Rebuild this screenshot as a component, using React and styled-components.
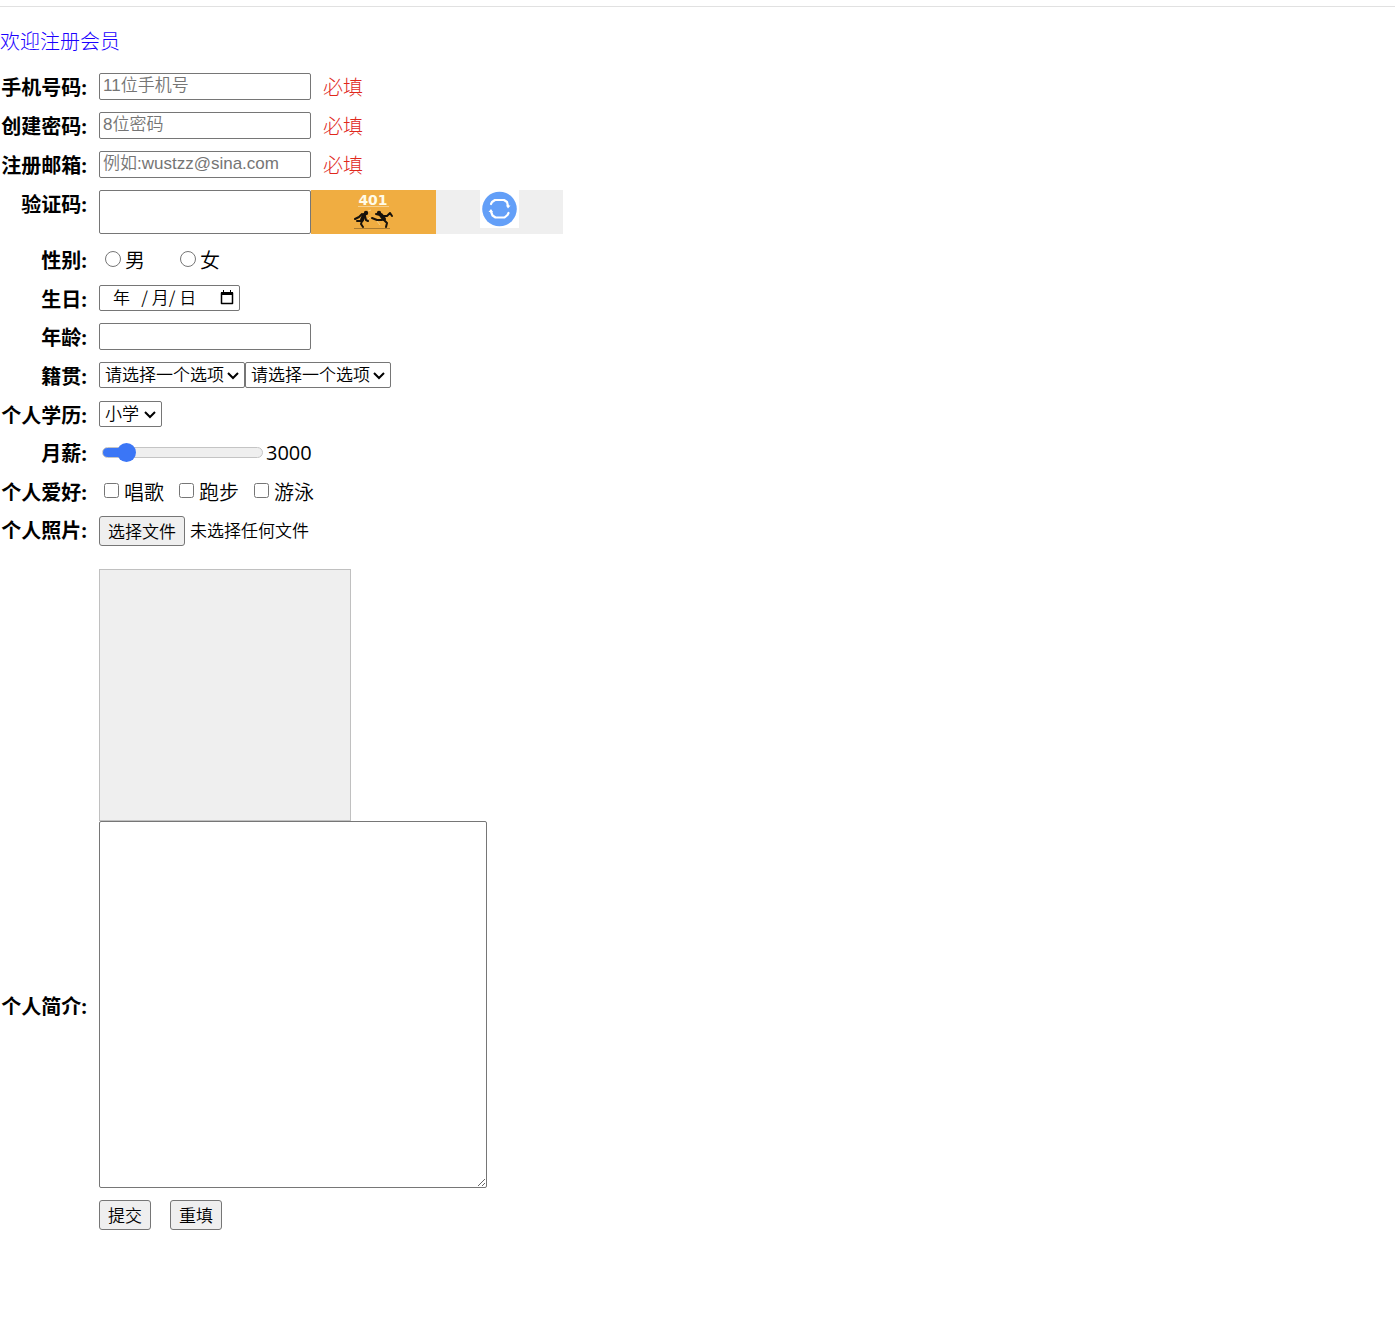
import React, { useRef, useState } from "react";
import styled, { createGlobalStyle } from "styled-components";

const GlobalStyle = createGlobalStyle`
  * { box-sizing: border-box; }
  body {
    margin: 0;
    background: #fff;
    color: #000;
    font: 350 20px/29px "Open Sans", "Noto Sans CJK SC", sans-serif;
  }
`;

const controlFont = `350 17px "Liberation Sans", "Noto Sans CJK SC", sans-serif`;

const Page = styled.main`
  padding: 6px 0 92px;
`;

const Divider = styled.hr`
  height: 1px;
  margin: 0;
  border: 0;
  background: #e1e1e1;
`;

const Title = styled.h1`
  margin: 20px 0 17px;
  color: #1a00ff;
  font-size: 20px;
  font-weight: 300;
`;

const Form = styled.form`
  display: flex;
  flex-direction: column;
  gap: 12px;
`;

const Group = styled.div`
  display: flex;
  flex-direction: column;
`;

const Row = styled.div`
  display: flex;
  align-items: ${(p) => (p.$center ? "center" : "flex-start")};
  gap: 12px;
  min-height: ${(p) => (p.$compact ? 26 : 27)}px;
`;

const Name = styled.label`
  flex: 0 0 87px;
  height: 26px;
  font-weight: 700;
  text-align: right;
  white-space: nowrap;
`;

const Controls = styled.div`
  display: flex;
  align-items: flex-start;
  gap: ${(p) => p.$gap || 0}px;
`;

const Column = styled.div`
  display: flex;
  flex-direction: column;
  gap: 23px;
`;

const TextInput = styled.input`
  width: 212px;
  height: ${(p) => (p.$tall ? 44 : 27)}px;
  padding: 0 3px 2px;
  border: 1px solid #767676;
  border-radius: 2px;
  background: #fff;
  color: #000;
  font: ${controlFont};
  &::placeholder { color: #757575; }
`;

const Required = styled.span`
  height: 26px;
  color: #e0281c;
  font-weight: 300;
`;

const CaptchaButton = styled.button`
  display: flex;
  justify-content: center;
  align-items: flex-start;
  width: ${(p) => p.$width}px;
  height: 44px;
  padding: 0;
  border: 0;
  background: ${(p) => p.$fill};
`;

const Choice = styled.label`
  display: flex;
  height: 26px;
  min-width: 75px;
`;

const Radio = styled.input`
  width: 16px;
  height: 16px;
  margin: 5px 4px 0 6px;
`;

const Check = styled.input`
  width: 15px;
  height: 15px;
  margin: 5px 5px 0 5px;
`;

const DateBox = styled.div`
  display: flex;
  align-items: center;
  width: 141px;
  height: 26px;
  padding: 0 5px 2px 13px;
  border: 1px solid #767676;
  border-radius: 2px;
`;

const DateInput = styled.input`
  flex: 1;
  min-width: 0;
  height: 22px;
  padding: 0 0 2px;
  border: 0;
  outline: 0;
  background: none;
  color: #000;
  font: 350 17px "Noto Sans CJK SC", sans-serif;
`;

const IconButton = styled.button`
  display: flex;
  padding: 0;
  border: 0;
  background: none;
`;

const SelectBox = styled.div`
  position: relative;
  width: ${(p) => p.$width}px;
`;

const NativeSelect = styled.select`
  display: block;
  appearance: none;
  width: 100%;
  height: 26px;
  padding: 0 20px 0 5px;
  border: 1px solid #767676;
  border-radius: 2px;
  background: #fff;
  color: #000;
  font: ${controlFont};
`;

const Chevron = styled.svg`
  position: absolute;
  top: 9px;
  right: 6px;
  pointer-events: none;
`;

const Slider = styled.input`
  appearance: none;
  width: 161px;
  height: 20px;
  margin: 3px 3px 0;
  background: none;

  &::-webkit-slider-runnable-track {
    height: 11px;
    border: 1px solid #c4c4c4;
    border-radius: 6px;
    background: linear-gradient(to right, #3b76f6 ${(p) => p.$fill}%, #efefef ${(p) => p.$fill}%);
  }

  &::-webkit-slider-thumb {
    appearance: none;
    width: 19px;
    height: 19px;
    margin-top: -5px;
    border-radius: 50%;
    background: #3b76f6;
  }
`;

const Amount = styled.output`
  height: 26px;
  font-weight: 400;
  line-height: 27px;
`;

const Button = styled.button`
  height: 30px;
  padding: 0 8px 1px;
  border: 1px solid #767676;
  border-radius: 3px;
  background: #efefef;
  color: #000;
  font: ${controlFont};
`;

const FileName = styled.span`
  font-size: 17px;
`;

const Preview = styled.div`
  width: 252px;
  height: 252px;
  border: 1px solid #c0c0c0;
  background: #efefef;
`;

const TextArea = styled.textarea`
  width: 388px;
  height: 367px;
  border: 1px solid #767676;
  border-radius: 2px;
  background: #fff;
  font: ${controlFont};
`;

const Actions = styled.div`
  display: flex;
  gap: 19px;
  padding-left: 99px;
`;

function CaptchaArt() {
  return (
    <svg width="125" height="44" viewBox="0 0 125 44" aria-label="401">
      <text x="62" y="15" textAnchor="middle" fill="#fffbe8" fontFamily="DejaVu Sans" fontSize="14" fontWeight="700">401</text>
      <path d="M47 16.5h31" stroke="#f6d08e" strokeWidth="1" />
      <path d="M43 38.5h36" stroke="#aa7b31" strokeWidth="1" />
      <path d="M57 21l3-1M56 30l3-3M66 31l3 4" fill="none" stroke="#f6cf87" strokeWidth="1" />
      <g fill="none" stroke="#17120b" strokeLinecap="round" strokeLinejoin="round">
        <path d="M53 25l-2 5" strokeWidth="4" />
        <path d="M51 24l-3 3-4 2M50 31l-4 0M51 31l-1 3 2 3M54 26l1 4 2 1" strokeWidth="2" />
        <path d="M70 25l3 4" strokeWidth="4" />
        <path d="M69 25l-4-1M71 30l-5 0-5-2M73 30l3 3-1 4M72 26l4 0 3-3 2 3" strokeWidth="2" />
      </g>
      <circle cx="55" cy="23" r="2.200" fill="#17120b" />
      <circle cx="68" cy="23" r="2.200" fill="#17120b" />
    </svg>
  );
}

function RefreshArt() {
  return (
    <svg width="39" height="38" viewBox="0 0 39 38" aria-hidden="true">
      <path fill="#fff" d="M0 0h39v38H0z" />
      <circle cx="19.5" cy="19" r="17.3" fill="#639ff8" />
      <g fill="none" stroke="#fff" strokeWidth="2.2" strokeLinecap="round" strokeLinejoin="round">
        <path d="M11 14l1-2 3-2h9l3 2 1 4" />
        <path d="M28.500 23l-1 2-3 2.500h-9l-3-2-1.500-4" />
      </g>
      <path fill="#fff" d="M26 15.500h4.500L28 18.500zM8.500 22h4.500L11 19z" />
    </svg>
  );
}

function CalendarArt() {
  return (
    <svg width="14" height="15" viewBox="0 0 14 15" aria-hidden="true">
      <path d="M1.500 3h11v10.500h-11z" fill="none" stroke="#000" strokeWidth="1.500" strokeLinejoin="round" />
      <path d="M1 2h12v3H1zM3 0h1v3H3zM10 0h1v3h-1z" />
    </svg>
  );
}

function Select({ width, children, ...rest }) {
  return (
    <SelectBox $width={width}>
      <NativeSelect {...rest}>{children}</NativeSelect>
      <Chevron width="12" height="9" viewBox="0 0 12 9" aria-hidden="true">
        <path d="M1 2l5 5 5-5" fill="none" stroke="#000" strokeWidth="2" />
      </Chevron>
    </SelectBox>
  );
}

const requiredFields = [
  { id: "phone", label: "手机号码:", type: "tel", hint: "11位手机号" },
  { id: "password", label: "创建密码:", type: "password", hint: "8位密码" },
  { id: "email", label: "注册邮箱:", type: "email", hint: "例如:wustzz@sina.com" },
];

const SALARY_MIN = 2000;
const SALARY_MAX = 12000;

export default function App() {
  const [salary, setSalary] = useState(3000);
  const [fileName, setFileName] = useState("未选择任何文件");
  const fileRef = useRef(null);
  const fill = ((salary - SALARY_MIN) / (SALARY_MAX - SALARY_MIN)) * 88 + 6;

  return (
    <>
      <GlobalStyle />
      <Page>
        <Divider />
        <Title>欢迎注册会员</Title>
        <Form onSubmit={(e) => e.preventDefault()}>
          {requiredFields.map((f) => (
            <Row key={f.id}>
              <Name htmlFor={f.id}>{f.label}</Name>
              <Controls $gap={12}>
                <TextInput id={f.id} type={f.type} placeholder={f.hint} />
                <Required>必填</Required>
              </Controls>
            </Row>
          ))}
          <Row>
            <Name htmlFor="captcha">验证码:</Name>
            <Controls>
              <TextInput id="captcha" $tall />
              <CaptchaButton type="button" $width={125} $fill="#f0ad41"><CaptchaArt /></CaptchaButton>
              <CaptchaButton type="button" $width={127} $fill="#efefef" aria-label="刷新"><RefreshArt /></CaptchaButton>
            </Controls>
          </Row>
          <Row role="radiogroup" aria-labelledby="gender">
            <Name as="span" id="gender">性别:</Name>
            <Controls>
              <Choice><Radio type="radio" name="gender" />男</Choice>
              <Choice><Radio type="radio" name="gender" />女</Choice>
            </Controls>
          </Row>
          <Row $compact>
            <Name htmlFor="birthday">生日:</Name>
            <DateBox>
              <DateInput id="birthday" defaultValue={"年   / 月/ 日"} />
              <IconButton type="button" aria-label="日历"><CalendarArt /></IconButton>
            </DateBox>
          </Row>
          <Row>
            <Name htmlFor="age">年龄:</Name>
            <TextInput id="age" />
          </Row>
          <Row>
            <Name htmlFor="province">籍贯:</Name>
            <Controls>
              <Select id="province" width={146}><option>请选择一个选项</option></Select>
              <Select id="city" width={146} aria-label="城市"><option>请选择一个选项</option></Select>
            </Controls>
          </Row>
          <Row $compact>
            <Name htmlFor="education">个人学历:</Name>
            <Select id="education" width={63}><option>小学</option></Select>
          </Row>
          <Row>
            <Name htmlFor="salary">月薪:</Name>
            <Controls>
              <Slider
                id="salary"
                type="range"
                min={SALARY_MIN}
                max={SALARY_MAX}
                step="100"
                value={salary}
                $fill={fill}
                onChange={(e) => setSalary(Number(e.target.value))}
              />
              <Amount htmlFor="salary">{salary}</Amount>
            </Controls>
          </Row>
          <Row $compact role="group" aria-labelledby="hobby">
            <Name as="span" id="hobby">个人爱好:</Name>
            <Controls>
              {["唱歌", "跑步", "游泳"].map((h) => (
                <Choice key={h}><Check type="checkbox" name="hobby" />{h}</Choice>
              ))}
            </Controls>
          </Row>
          <Group>
            <Row>
              <Name htmlFor="photo">个人照片:</Name>
              <Column>
                <Controls $gap={5}>
                  <input
                    id="photo"
                    ref={fileRef}
                    type="file"
                    hidden
                    onChange={(e) => setFileName(e.target.files[0]?.name || "未选择任何文件")}
                  />
                  <Button type="button" onClick={() => fileRef.current.click()}>选择文件</Button>
                  <FileName>{fileName}</FileName>
                </Controls>
                <Preview />
              </Column>
            </Row>
            <Row $center>
              <Name htmlFor="intro">个人简介:</Name>
              <TextArea id="intro" />
            </Row>
          </Group>
          <Actions>
            <Button type="submit">提交</Button>
            <Button type="reset">重填</Button>
          </Actions>
        </Form>
      </Page>
    </>
  );
}
